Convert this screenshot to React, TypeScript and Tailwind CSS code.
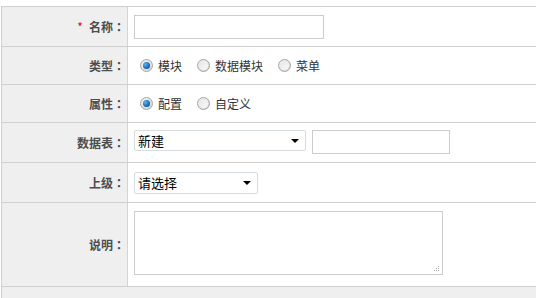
import type { ReactNode } from "react";

const FONT = "font-['Noto_Sans_CJK_SC','Liberation_Sans',sans-serif]";

function Radio({ checked, label }: { checked?: boolean; label: string }) {
  return (
    <label className="flex items-center mr-[15px]">
      <span className="w-[13px] h-[13px] rounded-full border border-[#a4a4a4] bg-gradient-to-br from-[#f4f4f4] to-[#d4d4d4] flex items-center justify-center">
        {checked ? (
          <span className="w-[7px] h-[7px] rounded-full bg-[radial-gradient(circle_at_35%_35%,#5fb4f0,#1669b4_60%,#0c3f7a)]" />
        ) : (
          <span className="w-[9px] h-[9px] rounded-full bg-gradient-to-br from-[#e6e6e6] to-[#fafafa]" />
        )}
      </span>
      <span className="ml-[5px] text-[12px] text-[#333]">{label}</span>
    </label>
  );
}

function FakeSelect({ value, width, height }: { value: string; width: string; height: string }) {
  return (
    <div
      className={`${width} ${height} border border-[#d6dbe0] rounded-[2px] bg-white flex items-center justify-between pl-[3px] pr-[6px]`}
    >
      <span className="text-[13px] text-black leading-none">{value}</span>
      <span className="w-0 h-0 border-l-[4px] border-r-[4px] border-t-[4px] border-l-transparent border-r-transparent border-t-black" />
    </div>
  );
}

function Row({
  label,
  required,
  height,
  children,
}: {
  label: string;
  required?: boolean;
  height: string;
  children: ReactNode;
}) {
  return (
    <div className={`grid grid-cols-[126px_1fr] border-b border-[#cfcfcf] ${height}`}>
      <div className="bg-[#efefef] border-r border-[#d4d4d4] flex items-center justify-end pr-[2px] text-[12px] font-bold text-[#4d4d4d]">
        {required && <span className="text-[#e00] font-normal mr-[6px]">*</span>}
        {label}
        <span className="font-['Noto_Sans_CJK_JP',sans-serif]">：</span>
      </div>
      {children}
    </div>
  );
}

export default function App() {
  return (
    <div className={`w-[536px] h-[298px] overflow-hidden bg-white ${FONT}`}>
      <div className="mt-[6px] ml-[1px] border-t border-l border-[#cfcfcf]">
        <Row label="名称" required height="h-[40px]">
          <div className="flex items-center pl-[6px]">
            <div className="w-[190px] h-[24px] border border-[#cccccc] bg-white" />
          </div>
        </Row>
        <Row label="类型" height="h-[38px]">
          <div className="flex items-center pl-[12px]">
            <Radio checked label="模块" />
            <Radio label="数据模块" />
            <Radio label="菜单" />
          </div>
        </Row>
        <Row label="属性" height="h-[38px]">
          <div className="flex items-center pl-[12px]">
            <Radio checked label="配置" />
            <Radio label="自定义" />
          </div>
        </Row>
        <Row label="数据表" height="h-[40px]">
          <div className="flex items-start gap-[6px] pl-[6px] pt-[7px]">
            <FakeSelect value="新建" width="w-[172px]" height="h-[21px]" />
            <div className="w-[138px] h-[24px] border border-[#cccccc] bg-white" />
          </div>
        </Row>
        <Row label="上级" height="h-[40px]">
          <div className="flex items-center pl-[6px]">
            <FakeSelect value="请选择" width="w-[124px]" height="h-[22px]" />
          </div>
        </Row>
        <Row label="说明" height="h-[84px]">
          <div className="flex items-start pl-[6px] pt-[8px]">
            <div className="relative w-[309px] h-[64px] border border-[#cccccc] bg-white">
              <svg
                className="absolute right-[2px] bottom-[2px]"
                width="7"
                height="7"
                viewBox="0 0 7 7"
              >
                <rect x="5" y="1" width="1" height="1" fill="#aaa" />
                <rect x="3" y="3" width="1" height="1" fill="#aaa" />
                <rect x="5" y="3" width="1" height="1" fill="#aaa" />
                <rect x="1" y="5" width="1" height="1" fill="#aaa" />
                <rect x="3" y="5" width="1" height="1" fill="#aaa" />
                <rect x="5" y="5" width="1" height="1" fill="#aaa" />
              </svg>
            </div>
          </div>
        </Row>
        <div className="h-[40px] bg-[#efefef]" />
      </div>
    </div>
  );
}
